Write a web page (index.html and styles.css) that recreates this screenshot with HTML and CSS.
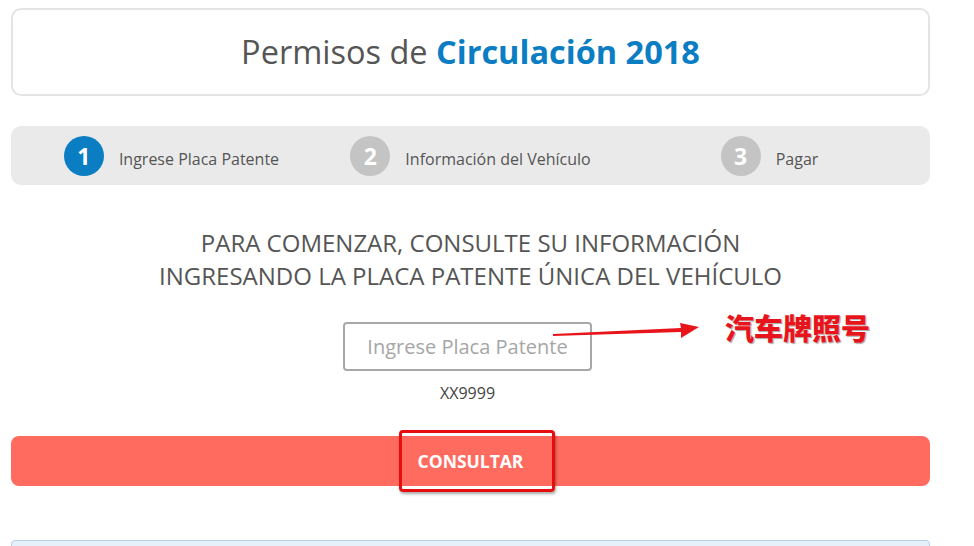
FILE: index.html
```html
<!DOCTYPE html>
<html lang="es">
<head>
    <meta charset="UTF-8">
    <meta name="viewport" content="width=device-width, initial-scale=1.0">
    <title>Permisos de Circulación 2018</title>
    <link rel="stylesheet" href="styles.css">
</head>
<body>
    <div class="page">
        <div class="header">
            <h1>Permisos de <strong>Circulación 2018</strong></h1>
        </div>

        <div class="steps">
            <div class="step active">
                <span class="num">1</span>
                <span class="label">Ingrese Placa Patente</span>
            </div>
            <div class="step">
                <span class="num">2</span>
                <span class="label">Información del Vehículo</span>
            </div>
            <div class="step">
                <span class="num">3</span>
                <span class="label">Pagar</span>
            </div>
        </div>

        <p class="intro">Para comenzar, consulte su información<br>ingresando la placa patente única del vehículo</p>

        <div class="plate">
            <div class="plate-field">
                <input type="text" placeholder="Ingrese Placa Patente">
                <div class="note">
                    <svg class="arrow" width="150" height="20" viewBox="0 0 150 20">
                        <polygon points="0,13 128,7 127,2 146,6 128,17 128,11 0,15" fill="#e8141b"/>
                    </svg>
                    <span class="note-text">汽车牌照号</span>
                </div>
            </div>
            <span class="hint">XX9999</span>
        </div>

        <div class="submit">
            <button class="consult">CONSULTAR</button>
            <span class="mark"></span>
        </div>

        <div class="info"></div>
    </div>
</body>
</html>
```

FILE: styles.css
```css
body {
    margin: 0;
    background: #fff;
    font-family: 'Open Sans', 'Noto Sans', sans-serif;
    color: #555;
}
.page {
    width: 919px;
    padding: 8px 0 0 11px;
}
.header {
    height: 84px;
    border: 2px solid #e4e4e4;
    border-radius: 10px;
    display: flex;
    align-items: center;
    justify-content: center;
}
.header h1 {
    margin: 0 0 2px;
    font-size: 32.5px;
    font-weight: 400;
    color: #555;
}
.header h1 strong {
    font-weight: 700;
    color: #0b7dc3;
}
.steps {
    margin-top: 30px;
    height: 59px;
    padding: 0 11px;
    background: #eaeaea;
    border-radius: 10px;
    display: grid;
    grid-template-columns: 1fr 1fr 1fr;
    align-items: center;
}
.step {
    display: flex;
    align-items: center;
    justify-content: center;
    gap: 15px;
}
.step .num {
    width: 40px;
    height: 40px;
    border-radius: 50%;
    background: #c4c4c4;
    color: #fff;
    font-size: 23px;
    font-weight: 700;
    display: flex;
    align-items: center;
    justify-content: center;
}
.step.active .num {
    background: #0b7dc3;
}
.step .label {
    font-size: 16px;
    color: #555;
    padding-top: 7px;
}
.intro {
    margin: 41px 0 0;
    text-align: center;
    text-transform: uppercase;
    font-size: 24px;
    line-height: 33px;
    color: #555;
}
.plate {
    margin-top: 30px;
    display: flex;
    flex-direction: column;
    align-items: center;
    padding-right: 6px;
}
.plate-field {
    position: relative;
}
.plate input {
    width: 249px;
    height: 49px;
    box-sizing: border-box;
    border: 2px solid #a8a8a8;
    border-radius: 4px;
    font-family: inherit;
    font-size: 20px;
    text-align: center;
    color: #555;
}
.plate input::placeholder {
    color: #a6a6a6;
}
.note {
    position: absolute;
    left: 210px;
    top: -16px;
    display: flex;
    align-items: center;
    white-space: nowrap;
}
.arrow {
    margin-top: 8px;
}
.note-text {
    margin-left: 22px;
    font-family: 'Noto Sans CJK SC', sans-serif;
    font-size: 29px;
    font-weight: 900;
    color: #e8141b;
    text-shadow: 0 0 2px #fff, 1px 1px 1px #888;
}
.hint {
    margin-top: 11px;
    font-size: 16px;
    color: #444;
}
.submit {
    margin-top: 32px;
    position: relative;
}
.consult {
    width: 100%;
    height: 50px;
    border: none;
    border-radius: 8px;
    background: #ff6b5f;
    color: #fff;
    font-family: inherit;
    font-size: 17.5px;
    font-weight: 700;
    cursor: pointer;
}
.mark {
    position: absolute;
    left: 388px;
    top: -6px;
    width: 150px;
    height: 56px;
    border: 3px solid #e50d0d;
    border-radius: 4px;
    box-shadow: 1px 2px 3px rgba(0, 0, 0, 0.35);
}
.info {
    margin-top: 54px;
    height: 40px;
    background: #e6f0fa;
    border: 1px solid #b7d0ea;
    border-radius: 4px;
}
```
